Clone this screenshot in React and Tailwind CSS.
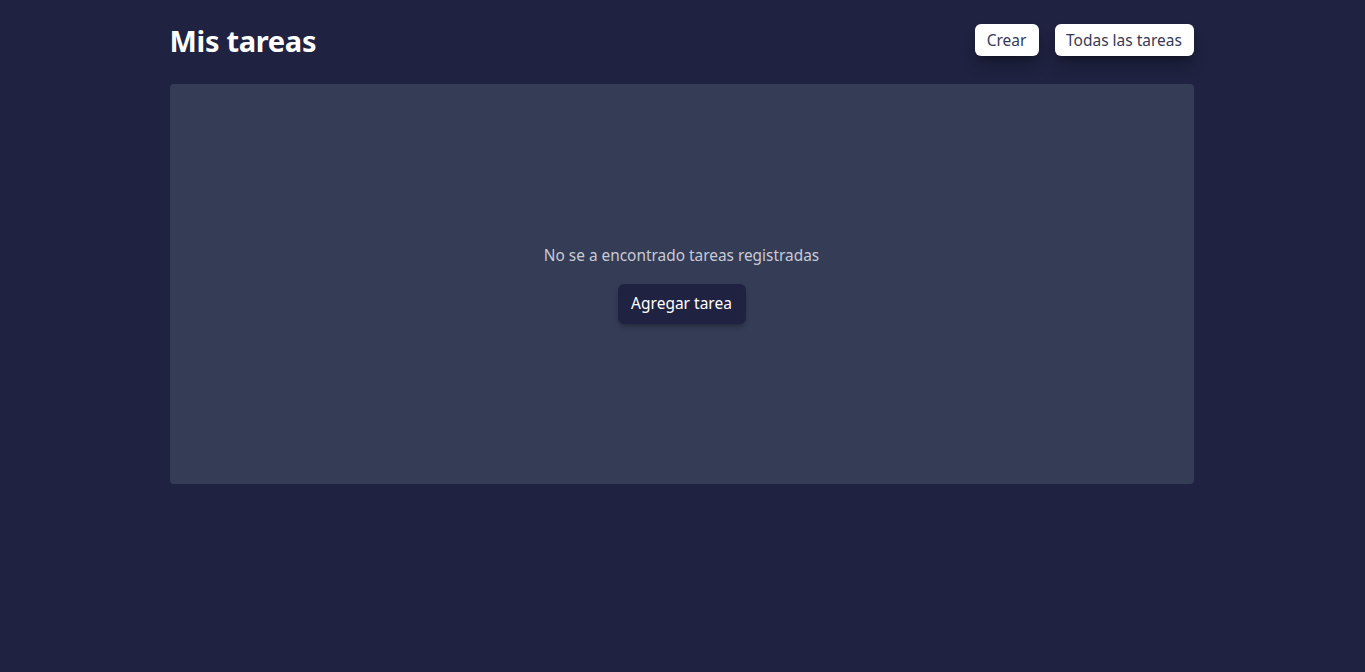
export default function App() {
  return (
    <div className="min-h-screen bg-[#1f2240] font-['Noto_Sans',sans-serif]">
      <div className="mx-auto w-[1026px] pr-0.5">
        <div className="pt-6">
          <header className="flex h-8 items-center justify-between">
            <h1 className="text-[29px] font-bold leading-none text-white tracking-[-0.3px]">Mis tareas</h1>
            <div className="flex gap-4">
              <button className="h-8 w-16 rounded-md bg-white pt-px text-[15.5px] text-[#363a56] shadow-lg shadow-black/30">
                Crear
              </button>
              <button className="h-8 w-[139px] rounded-md bg-white pt-px text-[15.5px] text-[#363a56] shadow-lg shadow-black/30">
                Todas las tareas
              </button>
            </div>
          </header>

          <main className="mt-7 flex h-[400px] flex-col items-center justify-center rounded-sm bg-[#353c56]">
            <p className="text-[15.4px] text-[#c8cbd6]">No se a encontrado tareas registradas</p>
            <button className="mt-4 h-10 w-32 rounded-md bg-[#1f2240] text-[15.5px] text-white shadow-md shadow-black/20">
              Agregar tarea
            </button>
          </main>
        </div>
      </div>
    </div>
  );
}
